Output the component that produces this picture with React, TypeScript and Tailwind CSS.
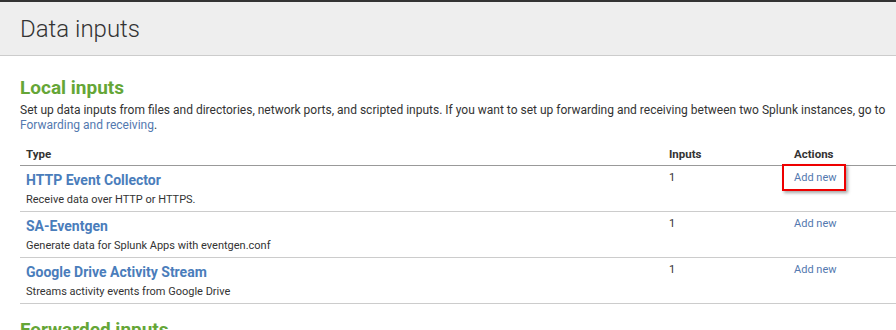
const rows = [
  { name: "HTTP Event Collector", desc: "Receive data over HTTP or HTTPS.", count: 1, marked: true },
  { name: "SA-Eventgen", desc: "Generate data for Splunk Apps with eventgen.conf", count: 1, marked: false },
  { name: "Google Drive Activity Stream", desc: "Streams activity events from Google Drive", count: 1, marked: false },
];

export default function App() {
  return (
    <div className="w-[896px] h-[330px] overflow-hidden bg-white font-['Roboto',sans-serif] text-[#333]">
      <div className="h-[2px] bg-[#333]" />
      <div className="h-[54px] bg-[#eeeeee] border-b border-[#cccccc] pl-[20px] flex items-center">
        <h1 className="text-[24px] font-light leading-none text-[#333]">Data inputs</h1>
      </div>

      <div className="pl-[20px] w-[1000px]">
        <h2 className="mt-[20px] text-[19px] font-bold leading-[24px] text-[#65a637]">Local inputs</h2>
        <p className="mt-[3px] w-[872px] text-[12px] leading-[15px]">
          Set up data inputs from files and directories, network ports, and scripted inputs. If you want to set up
          forwarding and receiving between two Splunk instances, go to{" "}
          <a href="#" className="text-[#5379af]">Forwarding and receiving</a>.
        </p>

        <div className="mt-[11px] w-[980px] text-[12px]">
          <div className="flex h-[22px] items-center border-b border-[#999] font-bold text-[11.5px]">
            <div className="w-[643px] pl-[6px]">Type</div>
            <div className="w-[125px] pl-[6px]">Inputs</div>
            <div className="flex-1 pl-[6px]">Actions</div>
          </div>
          {rows.map((r) => (
            <div key={r.name} className="flex h-[46px] border-b border-[#cccccc]">
              <div className="w-[643px] pl-[6px] pt-[5px]">
                <div className="text-[14px] font-bold leading-[18px] text-[#4a7dbb]">{r.name}</div>
                <div className="mt-[4px] text-[11px] leading-[14px] text-[#333]">{r.desc}</div>
              </div>
              <div className="w-[125px] pl-[6px] pt-[5px] text-[11px] leading-[14px]">{r.count}</div>
              <div className="relative flex-1 pl-[6px] pt-[5px] text-[11px] leading-[14px]">
                <a href="#" className="text-[#5379af]">Add new</a>
                {r.marked && (
                  <div className="absolute left-[-6px] top-[-2px] h-[27px] w-[64px] border-2 border-[#ee0000] shadow-[2px_2px_3px_rgba(0,0,0,0.35)]" />
                )}
              </div>
            </div>
          ))}
        </div>

        <h2 className="mt-[14px] text-[19px] font-bold leading-[24px] text-[#65a637]">Forwarded inputs</h2>
      </div>
    </div>
  );
}
